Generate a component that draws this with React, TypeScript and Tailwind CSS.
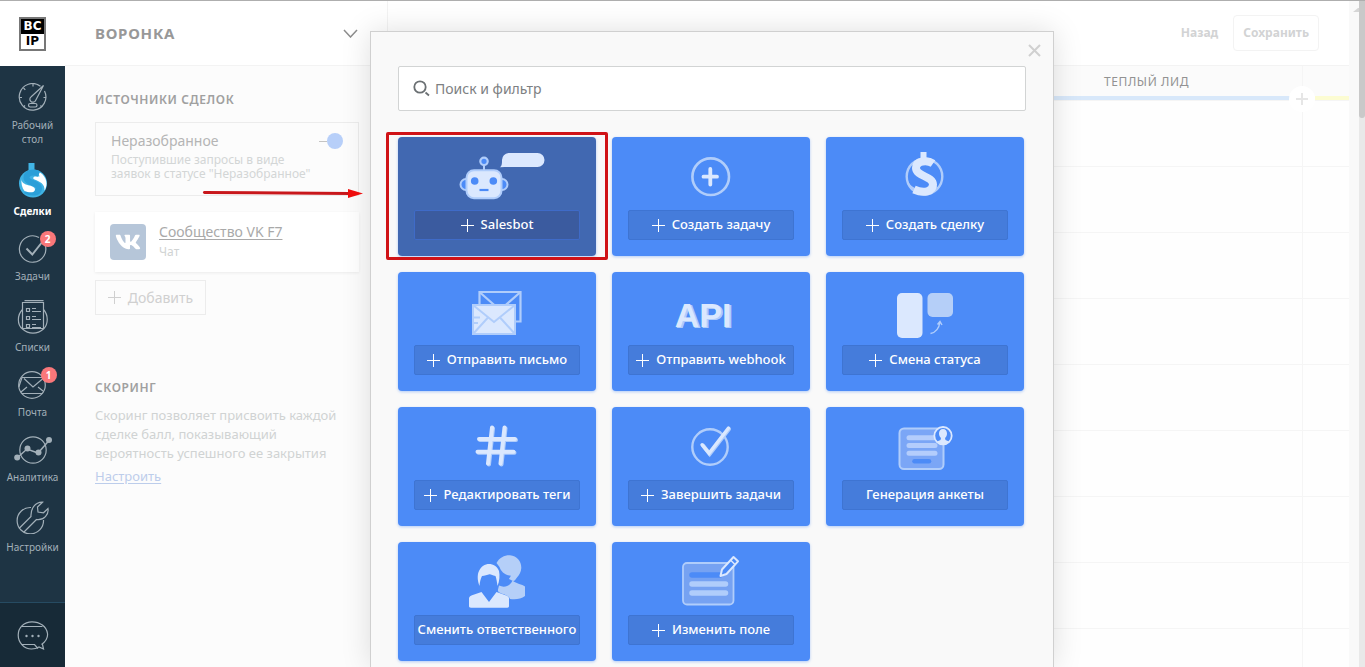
import type { ReactNode } from "react";
import { FaVk } from "react-icons/fa";

const PALE = "#dbe8fe";
const SOFT = "#b0cdfb";

/* ---------- Sidebar icons ---------- */

const DashboardIcon = () => (
  <svg width="30" height="29" viewBox="0 0 30 29" fill="none" stroke="currentColor" strokeWidth="1.2">
    <path d="M22.5 3.2A13.3 13.3 0 1 0 26.5 8" />
    <path d="M25.5 2.5 17.6 17.4a3 3 0 1 1-4.4-3.7z" />
    <rect x="10.500" y="20.500" width="8.500" height="3.500" rx="1.700" />
    <path d="M15 1v2.500M5.500 5l1.800 1.800M1.500 14.500H4M28 14.500h-2.500M5.500 24l1.500-1.500M24 24l-1.500-1.500" />
  </svg>
);

const DealsIcon = () => (
  <svg width="30" height="35" viewBox="0 0 30 35" fill="none">
    <circle cx="15" cy="20.500" r="14" fill="#3fb2e3" />
    <path d="M20 8.500c5 2 8.500 7 8.500 12 0 3-1 5.500-2 7C27 21 22 18.500 16.500 16.500c-2.500-1-1-3 1-3h4z" fill="#fff" />
    <path d="M10.500 0h6v8h-6z" fill="#41b5e6" />
    <path
      d="M21 11C15 8 8.500 10 8.500 14.500c0 6 12.500 5 12.500 11 0 4.500-7 5.500-13.500 2"
      stroke="#2b9fd8"
      strokeWidth="6"
    />
    <path d="M3.500 16C3.500 24 17 21 17 26.500c0 3.500-6 3.500-10.500 1.500C4 25 3 20 3.500 16z" fill="#fff" />
  </svg>
);

const TasksIcon = () => (
  <svg width="30" height="28" viewBox="0 0 30 28" fill="none" stroke="currentColor">
    <path d="M27 9.500A13.200 13.200 0 1 1 21 2.500" strokeWidth="1.200" />
    <path d="m8.500 13.500 5.800 6L25 6" strokeWidth="2" />
  </svg>
);

const ListsIcon = () => (
  <svg width="32" height="34" viewBox="0 0 32 34" fill="none" stroke="currentColor" strokeWidth="1.200">
    <path d="M5.500 2.500h21v26h-21zM7.500.6h19" />
    <path d="M5.500 9.500C0 15 0 25 5.500 29c6 5.500 15 5.500 21 0 5-5 5-14 0-19.500" />
    <path d="M9.500 8.500h3v3h-3zM9.500 16.500h3v3h-3zM9.500 24.500h3v3h-3zM15 8.500h4M15 11.500h9M15 16.500h4M15 19.500h9M15 24.500h4M15 27.500h9" />
  </svg>
);

const MailIcon = () => (
  <svg width="32" height="28" viewBox="0 0 32 28" fill="none" stroke="currentColor" strokeWidth="1.200">
    <circle cx="15" cy="14" r="13.300" />
    <path d="M5 6.500h20M5 22.500h20.500M5 6.500 1.800 16M7 7.500l9 8.500 10-8.500M4 21l6-5M26 20l-5-4" />
  </svg>
);

const AnalyticsIcon = () => (
  <svg width="38" height="28" viewBox="0 0 38 28" fill="none" stroke="currentColor">
    <circle cx="19" cy="14" r="13.200" strokeWidth="1.200" />
    <path d="m3 22 10-9 11 4L35.500 4" strokeWidth="1.500" />
    <g fill="currentColor" stroke="none">
      <circle cx="3.200" cy="21.500" r="3" />
      <circle cx="13.500" cy="12.500" r="3" />
      <circle cx="24.500" cy="16.500" r="3" />
      <circle cx="35" cy="4" r="3" />
    </g>
  </svg>
);

const SettingsIcon = () => (
  <svg width="33" height="33" viewBox="0 0 33 33" fill="none" stroke="currentColor" strokeWidth="1.200">
    <path d="M15 6.500A13.200 13.200 0 1 0 27.500 19" />
    <path d="M3 27.500 15 15.500C14.500 8 19 1 26.500 1.200L21.500 6l.5 5 5.500.8 4.500-4.300C33 13.500 28 19.500 20.500 18.500L8 31" />
  </svg>
);

const ChatIcon = () => (
  <svg width="32" height="29" viewBox="0 0 32 29" fill="none" stroke="currentColor" strokeWidth="1.200">
    <path d="M24.500 23.500c4-3 6.500-7 6-11C29.500 5.500 23 .8 15 .8S1.200 6.500 1.200 14 7 28 14.500 28c3 0 5.500-.7 7.500-2l4.500 2-1-4.500" />
    <path d="M5 5.500h20.500M4.500 23.500h13l3.500 4" />
    <g fill="currentColor" stroke="none">
      <circle cx="9.500" cy="15" r="1.200" />
      <circle cx="15.500" cy="15" r="1.200" />
      <circle cx="21.500" cy="15" r="1.200" />
    </g>
  </svg>
);

/* ---------- Action illustrations ---------- */

const Art = ({ children }: { children: ReactNode }) => (
  <svg width="198" height="73" viewBox="0 0 198 73" fill="none" aria-hidden="true">
    {children}
  </svg>
);

const robotArt = (
  <Art>
    <circle cx="68" cy="47.500" r="5.500" fill="#4c8bf7" stroke={SOFT} strokeWidth="2" />
    <circle cx="104" cy="47.500" r="5.500" fill="#4c8bf7" stroke={SOFT} strokeWidth="2" />
    <path d="M86 28v5" stroke={SOFT} strokeWidth="2" />
    <circle cx="86" cy="24.300" r="3.700" stroke={SOFT} strokeWidth="2.200" fill="#4c8bf7" />
    <rect x="68.500" y="33.200" width="35" height="28" rx="7.500" fill={PALE} stroke={SOFT} strokeWidth="2" />
    <circle cx="76.700" cy="44" r="3.800" fill="#4c8bf7" />
    <circle cx="95.300" cy="44" r="3.800" fill="#4c8bf7" />
    <path d="M81.500 53h9" stroke="#4c8bf7" strokeWidth="2.200" />
    <path d="M110.500 16h29a7 7 0 0 1 0 14h-33L102 30.300c2-1.500 2-4.300 2-7.300a7 7 0 0 1 6.500-7z" fill={PALE} />
  </Art>
);

const taskArt = (
  <Art>
    <circle cx="98.700" cy="39.700" r="18.300" stroke={SOFT} strokeWidth="2.600" />
    <path d="M91.500 39.700h13.500M98.300 32v15.500" stroke={PALE} strokeWidth="3.800" strokeLinecap="round" />
  </Art>
);

const dealArt = (
  <Art>
    <circle cx="98.500" cy="39.500" r="17.800" stroke={SOFT} strokeWidth="2.400" />
    <path d="M82 44c2 6 10 9 16 9 6-1 9-1 13-4-1 6-6 9-13 9s-15-6-16-14z" fill={SOFT} />
    <path d="M94.500 15h6v8h-6z" fill={PALE} />
    <path
      d="M107 26.500c-5-3.500-17-3.500-17 4.500 0 8.500 17 8 17 16.500 0 7-9 9.500-19 5"
      stroke={PALE}
      strokeWidth="8"
    />
  </Art>
);

const mailArt = (
  <Art>
    <path d="M81.500 20h41v29.500h-41z" stroke={SOFT} strokeWidth="2.200" />
    <path d="m82 20.500 20 17.500 20-17.500" stroke={SOFT} strokeWidth="2.200" />
    <path d="M75 33h42v29H75z" fill={PALE} stroke={SOFT} strokeWidth="2" />
    <path d="m75 33 21 17 21-17M75 62l15-16.500M117 62l-15-16.500M75 45.500h7M75 51h5" stroke={SOFT} strokeWidth="2" />
  </Art>
);

const apiArt = (
  <span className="flex h-[73px] items-center justify-center pt-3 pr-4 font-['Liberation_Sans',sans-serif] text-[34px] leading-none font-bold text-[#dbe8fe] [text-shadow:1px_1px_0_#b0cdfb,2px_1px_0_#b0cdfb]">
    API
  </span>
);

const statusArt = (
  <Art>
    <rect x="71" y="21" width="25.500" height="45" rx="5" fill={PALE} />
    <rect x="101.500" y="21" width="25.500" height="24" rx="5" fill="#b5cff8" />
    <path d="M104.500 61.500c5-1 8.500-5 9.500-11.500M111.500 52.500l2.500-3 2 3.500" stroke={SOFT} strokeWidth="1.400" />
  </Art>
);

const hashPath = "M81 32h36M79.500 44.800h36M94 20.500l-4 36M106.500 20.500l-4 36";

const tagsArt = (
  <Art>
    <path d={hashPath} stroke={SOFT} strokeWidth="4" strokeLinecap="round" transform="translate(1 1)" />
    <path d={hashPath} stroke={PALE} strokeWidth="4" strokeLinecap="round" />
  </Art>
);

const completeArt = (
  <Art>
    <circle cx="98" cy="40" r="17.700" stroke={SOFT} strokeWidth="2.400" />
    <path d="m91 38.500 6.700 8.500L117 22" stroke={SOFT} strokeWidth="4" strokeLinecap="round" />
    <path d="m90 37.700 7 8.500L116.500 21" stroke={PALE} strokeWidth="3.400" strokeLinecap="round" />
  </Art>
);

const formArt = (
  <Art>
    <rect x="73.500" y="21.500" width="44" height="40.500" rx="4.500" fill="#7ba6f6" stroke={SOFT} strokeWidth="2" />
    <path d="M83 30.700h26M83 38.500h26M83 46.300h26" stroke="#b4cdfc" strokeWidth="5" strokeLinecap="round" />
    <path d="M88.500 54.300h14.500" stroke="#4c8bf7" strokeWidth="4.500" strokeLinecap="round" />
    <circle cx="117" cy="28.700" r="8.700" fill="#4c8bf7" stroke={PALE} strokeWidth="1.800" />
    <path d="M117 22c2.500 0 4 2 4 4.500 0 2-1 3.500-2 4.500l.5 2 3.500 1.500c-3 3.500-9 3.500-12 0l3.500-1.500.5-2c-1-1-2-2.500-2-4.500 0-2.500 1.500-4.500 4-4.500z" fill={PALE} />
  </Art>
);

const responsibleArt = (
  <Art>
    <path d="M98.500 21c3-5.500 8-8 13.500-7.800 7 .5 11.500 6 11.300 12.800-.2 4-2 7-4.300 9.500-1.500 2-2 3.300-4 3.500-1.500-.5-2.500-1.500-4-2 .5-1.500 2-2 1.500-3.500-6 0-10-5-11-8.500z" fill="#b5cff8" />
    <path d="M101 43.500c5 2.500 11 1 13.500-5 4 3.500 9.500 3.500 12.500 6V54c-4 3.500-10 3.500-15 3-1-3-5-4.500-8.500-5.500-2.500-1-4-2-3.500-4z" fill="#b5cff8" />
    <path d="M81.500 44c-2-5-2.500-11-.5-15 2-4.500 6-7 10-7s8.500 2.500 10 7c1 4.500.5 10-1.500 15-.5-4-1-7-2-10-3-.5-4.500-2-6-1.800-2 .8-5 1.300-7.500 1.800-1.500 3-2.200 6-2.500 10z" fill={PALE} />
    <path d="M71 64V56c.5-1.500 1.500-2.200 3-2.700l9.500-3.300L91 60l7.500-10 9 3.300c2 .7 3.500 1.500 3.500 3.200v7.500c0 1.200-.5 1.700-1.700 1.700H73c-1.500 0-2-.5-2-1.700z" fill={PALE} />
  </Art>
);

const fieldArt = (
  <Art>
    <rect x="71" y="21" width="50.500" height="41.500" rx="4" fill="#76a2f2" stroke={SOFT} strokeWidth="1.800" />
    <path d="M80 33h28" stroke="#4c8bf7" strokeWidth="5.500" strokeLinecap="round" />
    <path d="M80 42h33.500M80 51h33.500" stroke={SOFT} strokeWidth="5.500" strokeLinecap="round" />
    <path d="m108.500 34 1.500-6.500L121.500 15l4.500 4.300L114.500 32z" fill="#4c8bf7" stroke={PALE} strokeWidth="2" strokeLinejoin="round" />
    <path d="m118.500 18 4.500 4.500" stroke={PALE} strokeWidth="1.500" />
  </Art>
);

/* ---------- Data ---------- */

const nav = [
  { label: "Рабочий стол", icon: <DashboardIcon /> },
  { label: "Сделки", icon: <DealsIcon />, active: true },
  { label: "Задачи", icon: <TasksIcon />, badge: 2 },
  { label: "Списки", icon: <ListsIcon /> },
  { label: "Почта", icon: <MailIcon />, badge: 1 },
  { label: "Аналитика", icon: <AnalyticsIcon /> },
  { label: "Настройки", icon: <SettingsIcon /> },
];

const actions = [
  { label: "Salesbot", art: robotArt, plus: true, selected: true },
  { label: "Создать задачу", art: taskArt, plus: true },
  { label: "Создать сделку", art: dealArt, plus: true },
  { label: "Отправить письмо", art: mailArt, plus: true },
  { label: "Отправить webhook", art: apiArt, plus: true },
  { label: "Смена статуса", art: statusArt, plus: true },
  { label: "Редактировать теги", art: tagsArt, plus: true },
  { label: "Завершить задачи", art: completeArt, plus: true },
  { label: "Генерация анкеты", art: formArt },
  { label: "Сменить ответственного", art: responsibleArt },
  { label: "Изменить поле", art: fieldArt, plus: true },
];

const rows = [1, 2, 3, 4, 5, 6, 7, 8, 9];

/* ---------- Pieces ---------- */

const Plus = () => (
  <svg width="13" height="13" viewBox="0 0 13 13" stroke="currentColor" aria-hidden="true" className="shrink-0">
    <path d="M6.500 0v13M0 6.500h13" />
  </svg>
);

function Sidebar() {
  return (
    <aside className="flex w-[65px] shrink-0 flex-col bg-[#1e3444]">
      <div className="flex h-[65px] shrink-0 items-center justify-center bg-white">
        <a href="#" className="flex w-[27px] flex-col border-2 border-[#777] text-center font-['DejaVu_Sans',sans-serif] text-[12px] leading-[15px] font-bold">
          <span className="bg-black text-white">BC</span>
          <span className="bg-white text-black">IP</span>
        </a>
      </div>
      <nav className="flex flex-1 flex-col gap-[17px] pt-[17px] text-[10px] leading-[14px] text-[#a3b0b9]">
        {nav.map((item) => (
          <a
            key={item.label}
            href="#"
            className={
              item.active
                ? "flex flex-col items-center gap-1.5 text-center font-bold text-white"
                : "flex flex-col items-center gap-1.5 text-center"
            }
          >
            <span className="relative block">
              {item.icon}
              {item.badge && (
                <span className="absolute -top-1 -right-2 flex size-4 items-center justify-center rounded-full bg-[#f9777a] font-bold text-white">
                  {item.badge}
                </span>
              )}
            </span>
            <span className="px-2">{item.label}</span>
          </a>
        ))}
      </nav>
      <button
        type="button"
        aria-label="Чат"
        className="flex h-[65px] shrink-0 items-center justify-center border-t border-[#264b62] bg-[#172a37] text-[#a3b0b9]"
      >
        <ChatIcon />
      </button>
    </aside>
  );
}

function SourcesPanel() {
  return (
    <section className="flex w-[323px] shrink-0 flex-col border-r border-[#f3f3f3] bg-[#fcfcfc]">
      <header className="flex h-[65px] shrink-0 items-center justify-between border-b border-[#f3f3f3] bg-white pr-[29px] pl-[30px]">
        <h1 className="text-[15px] font-bold tracking-wider text-[#989898]">ВОРОНКА</h1>
        <button type="button" aria-label="Выбрать воронку" className="text-[#8d8d8d]">
          <svg width="15" height="9" viewBox="0 0 15 9" fill="none" stroke="currentColor" strokeWidth="1.500">
            <path d="m1 1 6.500 7L14 1" />
          </svg>
        </button>
      </header>

      <div className="flex flex-col px-[30px] pt-6 pr-7">
        <h2 className="text-[12px] leading-5 font-semibold tracking-wider text-[#a0a0a0]">ИСТОЧНИКИ СДЕЛОК</h2>
        <div className="mt-3 flex h-[74px] items-start justify-between border border-[#ececec] px-[15px] pt-2">
          <div>
            <h3 className="text-[14px] leading-5 text-[#b5b5b5]">Неразобранное</h3>
            <p className="mt-0.5 w-[200px] text-[12px] leading-[14px] text-[#d3d6d6]">
              Поступившие запросы в виде заявок в статусе "Неразобранное"
            </p>
          </div>
          <button type="button" role="switch" aria-checked="true" aria-label="Неразобранное" className="mt-0.5 flex items-center">
            <span className="h-px w-2 bg-[#c4c4c4]" />
            <span className="size-4 rounded-full bg-[#b7cff9]" />
          </button>
        </div>

        <div className="mt-4 flex h-[60px] items-center gap-[13px] bg-white px-[15px] shadow-[0_1px_3px_rgba(0,0,0,0.07)]">
          <span className="flex size-9 items-center justify-center rounded bg-[#b6c6d9] text-white">
            <FaVk size={26} />
          </span>
          <div>
            <a href="#" className="block text-[14px] leading-5 text-[#a9a9a9] underline underline-offset-2">
              Сообщество VK F7
            </a>
            <p className="text-[12px] leading-5 text-[#d0d3d3]">Чат</p>
          </div>
        </div>

        <button
          type="button"
          className="mt-2 flex h-[35px] w-[111px] items-center justify-center gap-[7px] border border-[#ececec] text-[14px] text-[#d0d0d0]"
        >
          <Plus />
          Добавить
        </button>

        <h2 className="mt-[63px] text-[12px] leading-5 font-semibold tracking-wider text-[#a0a0a0]">СКОРИНГ</h2>
        <p className="mt-2 max-w-[252px] text-[13px] leading-[19px] text-[#d0d3d3]">
          Скоринг позволяет присвоить каждой сделке балл, показывающий вероятность успешного ее закрытия
        </p>
        <a href="#" className="mt-[3px] self-start text-[13px] leading-5 text-[#bccdeb] underline underline-offset-2">
          Настроить
        </a>
      </div>
    </section>
  );
}

function Column({ title, className, bar }: { title?: string; className: string; bar: string }) {
  return (
    <div className={className}>
      <div className="flex h-[30px] items-center justify-center bg-[#fbfbfb] pt-0.5 text-[12px] tracking-wider text-[#929292]">
        {title}
      </div>
      <div className={bar} />
      {rows.map((row) => (
        <div key={row} className="h-[66px] border-t border-[#f5f5f5]" />
      ))}
    </div>
  );
}

function Board() {
  return (
    <section className="flex min-w-0 flex-1 flex-col overflow-hidden bg-[#fefefe]">
      <header className="flex h-[65px] shrink-0 items-center justify-end gap-[15px] border-b border-[#f3f3f3] bg-white pr-[30px] text-[12px] font-bold text-[#d2d3d4]">
        <button type="button">Назад</button>
        <button type="button" className="h-9 rounded-sm border border-[#f3f3f3] px-[9px]">
          Сохранить
        </button>
      </header>
      <div className="flex">
        <Column className="flex-1" bar="h-1 bg-[#d8e8fa]" />
        <Column className="flex-1" bar="h-1 bg-[#d8e8fa]" />
        <div className="relative w-[312px] shrink-0">
          <Column title="ТЕПЛЫЙ ЛИД" className="border-r border-[#f5f5f5]" bar="h-1 bg-[#d8e8fa]" />
          <button
            type="button"
            aria-label="Добавить этап"
            className="absolute top-5 -right-3 flex size-[26px] items-center justify-center rounded-full bg-white text-[#e6e6e6]"
          >
            <svg width="12" height="12" viewBox="0 0 12 12" stroke="currentColor" strokeWidth="2">
              <path d="M6 0v12M0 6h12" />
            </svg>
          </button>
        </div>
        <Column className="w-[46px] shrink-0" bar="ml-3 h-1 bg-[#fcfcd2]" />
      </div>
    </section>
  );
}

function ActionCard({ label, art, plus, selected }: { label: string; art: ReactNode; plus?: boolean; selected?: boolean }) {
  return (
    <article
      className={
        selected
          ? "relative w-[198px] rounded bg-[#4168b1] pb-4 shadow-[0_1px_3px_rgba(76,139,247,0.4)]"
          : "relative w-[198px] rounded bg-[#4c8bf7] pb-4 shadow-[0_1px_3px_rgba(76,139,247,0.4)]"
      }
    >
      {art}
      <button
        type="button"
        className={
          selected
            ? "mx-4 flex h-[30px] w-[166px] items-center justify-center gap-[7px] rounded-xs border border-[#3f6bc8] bg-[#3b5b9f] text-[13px] font-medium whitespace-nowrap text-white"
            : "mx-4 flex h-[30px] w-[166px] items-center justify-center gap-[7px] rounded-xs border border-[#3e74d2] bg-[#457cdb] text-[13px] font-medium whitespace-nowrap text-white"
        }
      >
        {plus && <Plus />}
        {label}
      </button>
      {selected && <div className="absolute -inset-x-3 -top-[5px] -bottom-1 rounded-xs border-3 border-[#d01317]" />}
    </article>
  );
}

function ActionsDialog() {
  return (
    <div
      role="dialog"
      aria-label="Добавить действие"
      className="relative h-full w-[684px] border border-b-0 border-[#d0d0d0] bg-[#f9f9f9] px-[27px] pt-[34px] shadow-[0_0_28px_rgba(0,0,0,0.13)]"
    >
      <button type="button" aria-label="Закрыть" className="absolute top-3 right-3 text-[#d0d0d0]">
        <svg width="13" height="13" viewBox="0 0 13 13" stroke="currentColor" strokeWidth="2">
          <path d="m1 1 11 11M12 1 1 12" />
        </svg>
      </button>
      <label className="flex h-[45px] items-center gap-[5px] rounded-xs border border-[#d2d4d4] bg-white px-3.5 text-[#6b7073]">
        <svg width="17" height="17" viewBox="0 0 17 17" fill="none" stroke="currentColor" strokeWidth="1.800">
          <circle cx="7" cy="7" r="5.700" />
          <path d="m12.500 12.500 3.500 3" />
        </svg>
        <input
          type="text"
          aria-label="Поиск и фильтр"
          placeholder="Поиск и фильтр"
          className="min-w-0 flex-1 bg-transparent text-[14px] outline-none placeholder:text-[#7d8082]"
        />
      </label>
      <div className="mt-[26px] flex flex-wrap gap-4">
        {actions.map((action) => (
          <ActionCard key={action.label} {...action} />
        ))}
      </div>
    </div>
  );
}

export default function App() {
  return (
    <div className="relative flex h-screen overflow-hidden border-t border-[#aeaeae] bg-white font-['Noto_Sans',sans-serif]">
      <Sidebar />
      <SourcesPanel />
      <Board />
      <div className="flex w-2.5 shrink-0 flex-col items-end bg-[#f9f9f9] pt-[7px]">
        <svg width="6" height="4" viewBox="0 0 6 4" fill="#d5d5d5">
          <path d="M0 4 5 0h1v4z" />
        </svg>
      </div>
      <div className="w-1.5 shrink-0 bg-[#e9e9e9]">
        <div className="h-[117px] rounded-b-sm bg-[#c9c9c9]" />
      </div>

      <div className="absolute top-[30px] right-1.5 bottom-0 left-[65px] flex justify-center">
        <ActionsDialog />
      </div>

      <svg className="absolute top-[187px] left-[202px]" width="162" height="12" viewBox="0 0 162 12" aria-hidden="true">
        <path d="M2.500 4.500 148 5.500" stroke="#c8171b" strokeWidth="3" strokeLinecap="round" />
        <path d="m146 1 15 4.500-15 4.500z" fill="#ee0d0d" />
      </svg>
    </div>
  );
}
